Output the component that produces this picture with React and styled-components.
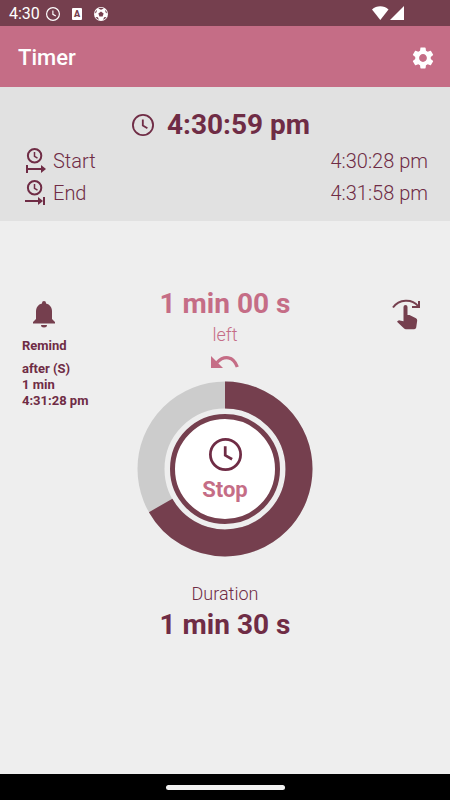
import React from 'react';
import styled, { createGlobalStyle } from 'styled-components';
import { MdSettings } from 'react-icons/md';

const GlobalStyle = createGlobalStyle`
  * {
    box-sizing: border-box;
  }

  body {
    margin: 0;
    background: #eeeeee;
    color: #6f2c45;
    font-family: Roboto, 'Liberation Sans', sans-serif;
  }
`;

const REMAINING = 60;
const DURATION = 90;

const ClockIcon = ({ size, stroke = 2 }) => (
  <svg width={size} height={size} viewBox="0 0 24 24" fill="none" stroke="currentColor" strokeWidth={stroke} aria-hidden="true">
    <circle cx="12" cy="12" r={12 - stroke / 2} />
    <path d="M11.800 6v6.600l5 2.900" />
  </svg>
);

const StartIcon = () => (
  <svg width="22" height="26" viewBox="0 0 22 26" fill="none" stroke="currentColor" strokeWidth="2" aria-hidden="true">
    <circle cx="10.600" cy="7.800" r="6.700" />
    <path d="M10.500 4v4.300l3 1.800" strokeWidth="1.500" />
    <path d="M3 17v8M3 21h15" />
    <path d="M17 17l5 4-5 4z" fill="currentColor" stroke="none" />
  </svg>
);

const EndIcon = () => (
  <svg width="22" height="26" viewBox="0 0 22 26" fill="none" stroke="currentColor" strokeWidth="2" aria-hidden="true">
    <circle cx="10.600" cy="7.800" r="6.700" />
    <path d="M10.500 4v4.300l3 1.800" strokeWidth="1.500" />
    <path d="M1 21h15M20 17v8" />
    <path d="M14 17l5 4-5 4z" fill="currentColor" stroke="none" />
  </svg>
);

const LetterIcon = () => (
  <svg width="10" height="12" viewBox="0 0 10 12" aria-hidden="true">
    <rect width="10" height="12" rx="1" fill="#ffffff" />
    <text x="5" y="9" textAnchor="middle" fontSize="9" fontWeight="900" fill="#753f4e">A</text>
  </svg>
);

const BallIcon = () => (
  <svg width="14" height="14" viewBox="0 0 14 14" aria-hidden="true">
    <circle cx="7" cy="7" r="7" fill="#ffffff" />
    <g fill="#753f4e">
      <path d="M7 4.600l2.600 1.900-1 3H5.400l-1-3z" />
      <path d="M4.200 1.500L7 2.700l2.800-1.200A6.300 6.300 0 0 0 4.200 1.500z" />
      <path d="M.8 6.500l1.700-1.200.4-2.600A6 6 0 0 0 .8 6.500z" />
      <path d="M13.200 6.500l-1.700-1.200-.4-2.600a6 6 0 0 1 2.100 3.800z" />
      <path d="M1.500 10l2.400.3 1 2.500A6 6 0 0 1 1.500 10z" />
      <path d="M12.500 10l-2.400.3-1 2.500a6 6 0 0 0 3.400-2.800z" />
    </g>
  </svg>
);

const SignalIcons = () => (
  <svg width="32" height="15" viewBox="0 0 32 15" fill="#ffffff" aria-hidden="true">
    <path d="M0 3.500C4.500-.8 12-.8 16.500 3.500L8.300 14z" />
    <path d="M32 0v14H18z" />
  </svg>
);

const BellIcon = () => (
  <svg width="24" height="28" viewBox="0 0 24 28" fill="currentColor" aria-hidden="true">
    <path d="M12 1a2 2 0 0 1 2 2v.5c4 1 6 4 6 8V19l3 3v1.500H1V22l3-3v-7.500c0-4 2-7 6-8V3a2 2 0 0 1 2-2z" />
    <path d="M9 25h6a3 2.500 0 0 1-6 0z" />
  </svg>
);

const SwipeIcon = () => (
  <svg width="28" height="31" viewBox="0 0 28 31" aria-hidden="true">
    <path d="M1 8.500C7 0 20-.5 26 7" fill="none" stroke="currentColor" strokeWidth="2" />
    <path d="M27 2v6h-7" fill="none" stroke="currentColor" strokeWidth="2" />
    <path
      d="M11.500 8a2 2 0 0 1 4 0v8h2l6.500 3.200q1.300.8 1.200 2.300l-1 7q-.4 1.800-2 1.800h-8.300q-1 0-1.800-.8L5 22.700l1-1q.8-.6 1.800-.3l3.700.8z"
      fill="currentColor"
    />
  </svg>
);

const UndoIcon = () => (
  <svg width="28" height="14" viewBox="0 0 28 14" aria-hidden="true">
    <path d="M0 1v12h12z" fill="currentColor" />
    <path d="M6 7.500C13 .2 22.500 1 26.300 12" fill="none" stroke="currentColor" strokeWidth="3.200" />
  </svg>
);

const ProgressRing = ({ value }) => {
  const length = 2 * Math.PI * 74;
  return (
    <Ring viewBox="0 0 176 176" role="img" aria-label="Time left">
      <circle cx="88" cy="88" r="74" stroke="#cccccc" />
      <circle
        cx="88"
        cy="88"
        r="74"
        stroke="#753f4e"
        strokeDasharray={`${length * value} ${length}`}
        transform="rotate(-90 88 88)"
      />
    </Ring>
  );
};

const App = () => (
  <Screen>
    <GlobalStyle />
    <StatusBar>
      <StatusTime>4:30</StatusTime>
      <StatusIcons>
        <ClockIcon size={14} stroke={2} />
        <LetterIcon />
        <BallIcon />
      </StatusIcons>
      <Signal>
        <SignalIcons />
      </Signal>
    </StatusBar>
    <Header>
      <Title>Timer</Title>
      <IconButton aria-label="Settings">
        <MdSettings size={26} />
      </IconButton>
    </Header>

    <Summary>
      <CurrentTime>
        <ClockIcon size={22} stroke={2} />
        <BigText>4:30:59 pm</BigText>
      </CurrentTime>
      <TimeRow>
        <StartIcon />
        <span>Start</span>
        <TimeValue>4:30:28 pm</TimeValue>
      </TimeRow>
      <TimeRow>
        <EndIcon />
        <span>End</span>
        <TimeValue>4:31:58 pm</TimeValue>
      </TimeRow>
    </Summary>

    <Main>
      <Reminder>
        <BellIcon />
        <span>Remind</span>
        <ReminderDetail>
          after (S)
          <br />
          1 min
          <br />
          4:31:28 pm
        </ReminderDetail>
      </Reminder>
      <Timer>
        <BigText $accent>1 min 00 s</BigText>
        <Caption $accent>left</Caption>
        <UndoButton aria-label="Undo">
          <UndoIcon />
        </UndoButton>
        <Dial>
          <ProgressRing value={REMAINING / DURATION} />
          <StopButton>
            <ClockIcon size={33} stroke={2} />
            Stop
          </StopButton>
        </Dial>
        <Caption>Duration</Caption>
        <BigText>1 min 30 s</BigText>
      </Timer>
      <SwipeButton aria-label="Swipe">
        <SwipeIcon />
      </SwipeButton>
    </Main>

    <NavigationBar>
      <Handle />
    </NavigationBar>
  </Screen>
);

export default App;

const Screen = styled.div`
  display: flex;
  flex-direction: column;
  min-height: 100vh;
`;

const StatusBar = styled.div`
  display: flex;
  align-items: center;
  gap: 6px;
  height: 26px;
  padding: 1px 46px 0 9px;
  background: #753f4e;
  color: #ffffff;
`;

const StatusTime = styled.span`
  font-size: 16px;
  line-height: 26px;
`;

const StatusIcons = styled.span`
  display: flex;
  align-items: center;
  gap: 12px;
`;

const Signal = styled.span`
  display: flex;
  margin-left: auto;
`;

const Header = styled.header`
  display: flex;
  align-items: center;
  justify-content: space-between;
  height: 61px;
  padding: 2px 14px 0 18px;
  background: #c56d86;
  color: #ffffff;
`;

const Title = styled.h1`
  margin: 0;
  font-size: 22px;
  font-weight: 500;
`;

const IconButton = styled.button`
  display: flex;
  padding: 0;
  border: 0;
  background: none;
  color: inherit;
  cursor: pointer;
`;

const Summary = styled.section`
  padding: 21px 22px 12px 24px;
  background: #e1e1e1;
`;

const CurrentTime = styled.div`
  display: flex;
  align-items: center;
  justify-content: center;
  gap: 13px;
  margin-bottom: 3px;
  padding-right: 10px;
`;

const BigText = styled.div`
  color: ${({ $accent }) => ($accent ? '#c56d86' : '#6f2c45')};
  font-size: 28px;
  font-weight: 700;
  line-height: 34px;
`;

const TimeRow = styled.div`
  display: flex;
  align-items: center;
  gap: 7px;
  height: 32px;
  font-size: 20px;
  font-weight: 300;
`;

const TimeValue = styled.time`
  margin-left: auto;
`;

const Main = styled.main`
  display: grid;
  grid-template-columns: 1fr auto 1fr;
  align-items: start;
  flex: 1;
  padding: 66px 22px 20px;
`;

const Reminder = styled.button`
  display: flex;
  flex-direction: column;
  align-items: flex-start;
  justify-self: start;
  margin-top: 13px;
  padding: 0;
  border: 0;
  background: none;
  color: inherit;
  font: 700 13px/16px Roboto, 'Liberation Sans', sans-serif;
  text-align: left;
  white-space: nowrap;
  cursor: pointer;

  svg {
    margin: 0 0 10px 10px;
    color: #753f4e;
  }
`;

const ReminderDetail = styled.span`
  margin-top: 7px;
`;

const Timer = styled.div`
  display: flex;
  flex-direction: column;
  align-items: center;
`;

const Caption = styled.div`
  color: ${({ $accent }) => ($accent ? '#c56d86' : '#6f2c45')};
  font-size: 18px;
  font-weight: 300;
  line-height: 28px;
`;

const UndoButton = styled(IconButton)`
  margin: 6px 0 12px;
  color: #c56d86;
`;

const Dial = styled.div`
  display: grid;
  place-items: center;
  margin-bottom: 23px;

  > * {
    grid-area: 1 / 1;
  }
`;

const Ring = styled.svg`
  width: 176px;
  height: 176px;
  fill: none;
  stroke-width: 27px;
`;

const StopButton = styled.button`
  display: flex;
  flex-direction: column;
  align-items: center;
  justify-content: center;
  gap: 6px;
  width: 110px;
  height: 110px;
  padding: 2px 0 0;
  border: 5px solid #753f4e;
  border-radius: 50%;
  background: #ffffff;
  color: #c56d86;
  font: 700 22px/26px Roboto, 'Liberation Sans', sans-serif;
  cursor: pointer;

  svg {
    color: #6f2c45;
  }
`;

const SwipeButton = styled(IconButton)`
  justify-self: end;
  margin: 12px 8px 0 0;
  color: #753f4e;
`;

const NavigationBar = styled.footer`
  display: flex;
  align-items: center;
  justify-content: center;
  height: 26px;
  background: #000000;
`;

const Handle = styled.div`
  width: 119px;
  height: 5px;
  border-radius: 3px;
  background: #f2f2f2;
`;
